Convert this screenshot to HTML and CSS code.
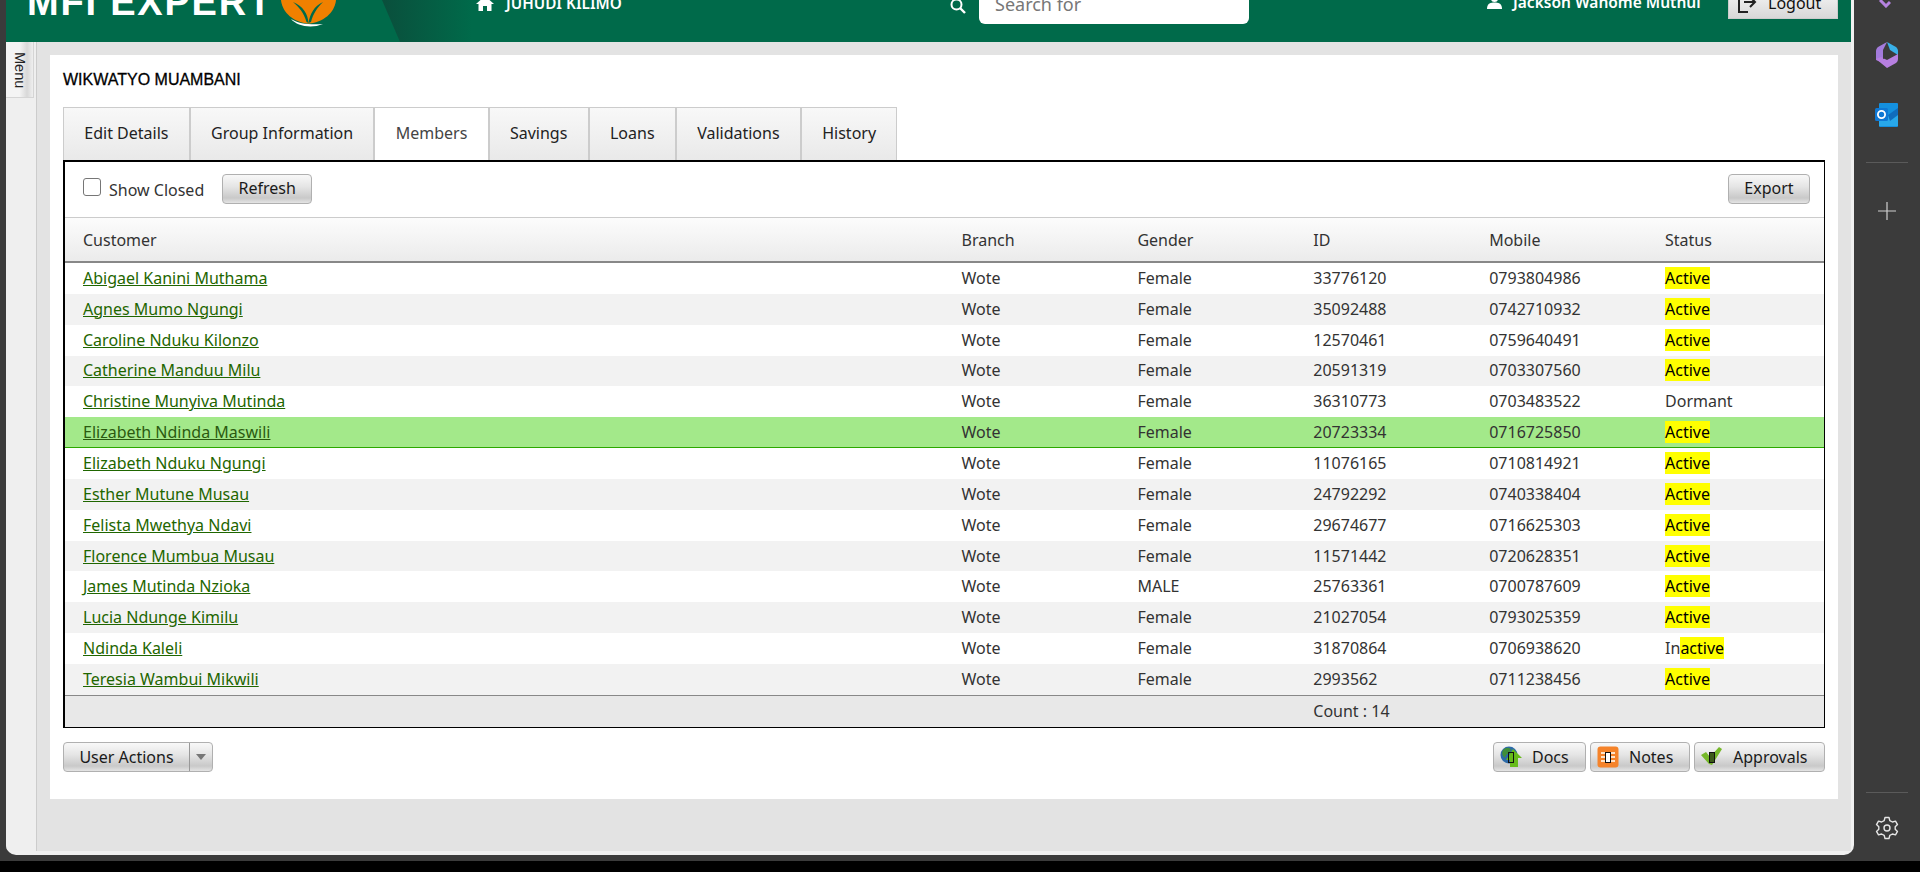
FILE: index.html
```html
<!DOCTYPE html>
<html>
<head>
  <meta charset="UTF-8">
  <link rel="stylesheet" href="styles.css">
</head>
<body>
  <div class="window">
    <div class="top-bar">
      <div class="brand">
        <span class="brand-name">MFI EXPERT</span>
        <svg class="brand-leaf" viewBox="0 0 55 28" width="55" height="28">
          <path d="M0 0 H55 C54 10 46 21 29 23.5 H26 C9 21 1 10 0 0 Z" fill="#f08000"/>
          <path d="M27.5 23 C27 14 22 6 12 2 C18 7 23 13 25.5 22 Z" fill="#006a4a"/>
          <path d="M27.5 23 C29 14 33 6 42 2 C36 8 32 14 30 22 Z" fill="#006a4a"/>
          <path d="M10 19 C16 26 30 29 42 24 C30 25 18 24 10 19 Z" fill="#fff"/>
        </svg>
      </div>
      <div class="brand-slant"></div>
      <div class="org">
        <svg viewBox="0 0 18 16" width="18" height="16"><path d="M9 1 L18 9 H15.5 V16 H11 V11 H7 V16 H2.5 V9 H0 Z" fill="#fff"/></svg>
        <span>JUHUDI KILIMO</span>
      </div>
      <div class="search">
        <svg viewBox="0 0 16 16" width="16" height="16"><circle cx="6.5" cy="6.5" r="5" fill="none" stroke="#fff" stroke-width="2"/><path d="M10 10 L15 15" stroke="#fff" stroke-width="2.4"/></svg>
        <div class="search-box">Search for</div>
      </div>
      <div class="user">
        <svg viewBox="0 0 15 14" width="15" height="14"><circle cx="7.5" cy="3.5" r="3.6" fill="#fff"/><path d="M0 14 C0 8 4 7.5 7.5 7.5 C11 7.5 15 8 15 14 Z" fill="#fff"/></svg>
        <span>Jackson Wahome Muthui</span>
      </div>
      <div class="logout">
        <svg viewBox="0 0 20 20" width="20" height="20"><path d="M11 3 H2 V19 H11" fill="none" stroke="#222" stroke-width="2"/><path d="M7 9 H17 M13 4 L18 9 L13 14" fill="none" stroke="#222" stroke-width="2"/></svg>
        <span>Logout</span>
      </div>
    </div>

    <div class="body-row">
      <div class="rail">
        <div class="rail-tab"><span>Menu</span></div>
      </div>
      <div class="content">
        <div class="panel">
          <div class="panel-title">WIKWATYO MUAMBANI</div>
          <div class="tabs">
            <div class="tab">Edit Details</div>
            <div class="tab">Group Information</div>
            <div class="tab active">Members</div>
            <div class="tab">Savings</div>
            <div class="tab">Loans</div>
            <div class="tab">Validations</div>
            <div class="tab">History</div>
          </div>
          <div class="grid-box">
            <div class="toolbar">
              <label class="show-closed"><span class="check"></span>Show Closed</label>
              <div class="btn btn-refresh">Refresh</div>
              <div class="btn btn-export">Export</div>
            </div>
            <div class="row head">
              <div>Customer</div><div>Branch</div><div>Gender</div><div>ID</div><div>Mobile</div><div>Status</div>
            </div>
            <div class="rows">
              <div class="row"><div><a>Abigael Kanini Muthama</a></div><div>Wote</div><div>Female</div><div>33776120</div><div>0793804986</div><div><mark>Active</mark></div></div>
              <div class="row alt"><div><a>Agnes Mumo Ngungi</a></div><div>Wote</div><div>Female</div><div>35092488</div><div>0742710932</div><div><mark>Active</mark></div></div>
              <div class="row"><div><a>Caroline Nduku Kilonzo</a></div><div>Wote</div><div>Female</div><div>12570461</div><div>0759640491</div><div><mark>Active</mark></div></div>
              <div class="row alt"><div><a>Catherine Manduu Milu</a></div><div>Wote</div><div>Female</div><div>20591319</div><div>0703307560</div><div><mark>Active</mark></div></div>
              <div class="row"><div><a>Christine Munyiva Mutinda</a></div><div>Wote</div><div>Female</div><div>36310773</div><div>0703483522</div><div>Dormant</div></div>
              <div class="row selected"><div><a>Elizabeth Ndinda Maswili</a></div><div>Wote</div><div>Female</div><div>20723334</div><div>0716725850</div><div><mark>Active</mark></div></div>
              <div class="row"><div><a>Elizabeth Nduku Ngungi</a></div><div>Wote</div><div>Female</div><div>11076165</div><div>0710814921</div><div><mark>Active</mark></div></div>
              <div class="row alt"><div><a>Esther Mutune Musau</a></div><div>Wote</div><div>Female</div><div>24792292</div><div>0740338404</div><div><mark>Active</mark></div></div>
              <div class="row"><div><a>Felista Mwethya Ndavi</a></div><div>Wote</div><div>Female</div><div>29674677</div><div>0716625303</div><div><mark>Active</mark></div></div>
              <div class="row alt"><div><a>Florence Mumbua Musau</a></div><div>Wote</div><div>Female</div><div>11571442</div><div>0720628351</div><div><mark>Active</mark></div></div>
              <div class="row"><div><a>James Mutinda Nzioka</a></div><div>Wote</div><div>MALE</div><div>25763361</div><div>0700787609</div><div><mark>Active</mark></div></div>
              <div class="row alt"><div><a>Lucia Ndunge Kimilu</a></div><div>Wote</div><div>Female</div><div>21027054</div><div>0793025359</div><div><mark>Active</mark></div></div>
              <div class="row"><div><a>Ndinda Kaleli</a></div><div>Wote</div><div>Female</div><div>31870864</div><div>0706938620</div><div>In<mark>active</mark></div></div>
              <div class="row alt"><div><a>Teresia Wambui Mikwili</a></div><div>Wote</div><div>Female</div><div>2993562</div><div>0711238456</div><div><mark>Active</mark></div></div>
            </div>
            <div class="row foot">
              <div></div><div></div><div></div><div>Count : 14</div><div></div><div></div>
            </div>
          </div>
          <div class="actions">
            <div class="btn split">
              <span class="split-label">User Actions</span>
              <span class="split-arrow"></span>
            </div>
            <div class="actions-right">
              <div class="btn btn-icon btn-docs">
                <svg viewBox="0 0 22 22" width="22" height="22">
                  <circle cx="9" cy="9" r="8.5" fill="#2c6aa8"/>
                  <path d="M3 4 C6 1 10 1 11 4 C10 8 6 7 5 12 C3 10 1 8 3 4 Z" fill="#3f8f3a"/>
                  <path d="M13 3 L22 12 H18 V21 H10 V14 H6 Z" fill="#66bb1a"/>
                  <rect x="8.5" y="6.5" width="5" height="10" fill="none" stroke="#111" stroke-width="1"/>
                </svg>
                <span>Docs</span>
              </div>
              <div class="btn btn-icon btn-notes">
                <svg viewBox="0 0 22 22" width="22" height="22">
                  <rect x="0.5" y="0.5" width="21" height="21" rx="3" fill="#f5832a"/>
                  <path d="M4 7 H18 M4 11 H18 M4 15 H18" stroke="#ffe3c8" stroke-width="2"/>
                  <rect x="8.5" y="6.5" width="5" height="10" fill="#fff" stroke="#111" stroke-width="1"/>
                </svg>
                <span>Notes</span>
              </div>
              <div class="btn btn-icon btn-approvals">
                <svg viewBox="0 0 22 22" width="22" height="22">
                  <path d="M0 9 L5 6 L9 11 L18 1 L21 3 L11 19 L8 18 Z" fill="#76b82a"/>
                  <rect x="8.5" y="6.5" width="5" height="10" fill="#3d5a1a" stroke="#111" stroke-width="1"/>
                </svg>
                <span>Approvals</span>
              </div>
            </div>
          </div>
        </div>
      </div>
    </div>
  </div>

  <div class="side">
    <svg class="side-part" viewBox="0 0 12 8" width="12" height="8"><path d="M1 0 L7 6 L11 2" fill="none" stroke="#b583e0" stroke-width="3"/></svg>
    <svg class="side-copilot" viewBox="0 0 22 26" width="22" height="26">
      <path d="M11 0 L20 5 C21 6 22 7 22 9 V13 L14 8 Z" fill="#39b0e8"/>
      <path d="M11 0 L2 5 C1 6 0 7 0 9 V18 L7 21 V8 Z" fill="#a37bdc"/>
      <path d="M0 17 L11 26 L20 21 C21 20 22 19 22 17 V12 L11 18 L5 15 Z" fill="#b77fe0"/>
      <path d="M7 8 L14 8 L15 13 L7 17 Z" fill="#3b3b3b"/>
    </svg>
    <svg class="side-outlook" viewBox="0 0 24 24" width="24" height="24">
      <rect x="4" y="0" width="19" height="24" rx="1" fill="#1490df"/>
      <path d="M4 12 L23 12 V23 H4 Z" fill="#28a8ea"/>
      <path d="M13 12 L23 5 V12 L15 18 Z" fill="#0f6cbd"/>
      <rect x="0" y="5" width="13" height="13" rx="1.5" fill="#0f78d4"/>
      <circle cx="6.5" cy="11.5" r="3.6" fill="none" stroke="#fff" stroke-width="1.8"/>
    </svg>
    <div class="side-line"></div>
    <svg class="side-plus" viewBox="0 0 18 18" width="18" height="18"><path d="M9 0 V18 M0 9 H18" stroke="#d0d0d0" stroke-width="1.2"/></svg>
    <div class="side-gap"></div>
    <div class="side-line"></div>
    <svg class="side-gear" viewBox="0 0 24 24" width="24" height="24">
      <circle cx="12" cy="12" r="3" fill="none" stroke="#e6e6e6" stroke-width="1.4"/>
      <path d="M10 1.5 H14 L14.8 4.6 L17.4 6 L20.5 5.1 L22.5 8.6 L20.2 10.8 V13.2 L22.5 15.4 L20.5 18.9 L17.4 18 L14.8 19.4 L14 22.5 H10 L9.2 19.4 L6.6 18 L3.5 18.9 L1.5 15.4 L3.8 13.2 V10.8 L1.5 8.6 L3.5 5.1 L6.6 6 L9.2 4.6 Z" fill="none" stroke="#e6e6e6" stroke-width="1.4" stroke-linejoin="round"/>
    </svg>
  </div>
</body>
</html>
```

FILE: styles.css
```css
* {
  margin: 0;
  padding: 0;
  box-sizing: border-box;
}

html, body {
  height: 100%;
  overflow: hidden;
}

body {
  display: flex;
  height: 872px;
  padding-left: 6px;
  background: linear-gradient(#3b3b3b 861px, #000 861px);
  font-family: "Noto Sans", "Open Sans", sans-serif;
  font-size: 14px;
  color: #333;
}

.window {
  display: flex;
  flex-direction: column;
  width: 1848px;
  height: 855px;
  padding: 0 3px 4px 0;
  background: #f0f0f0;
  border-radius: 0 0 10px 10px;
  overflow: hidden;
}

.top-bar {
  position: relative;
  display: flex;
  flex: none;
  align-items: flex-end;
  height: 42px;
  background: #006a4a;
  overflow: hidden;
  color: #fff;
}

.brand {
  display: flex;
  flex: none;
  align-items: flex-start;
  width: 470px;
  height: 42px;
  padding-left: 21px;
}

.brand-name {
  width: 254px;
  margin-top: -12px;
  font-family: "Liberation Sans", sans-serif;
  font-size: 38px;
  font-weight: 700;
  line-height: 28px;
  letter-spacing: 1.8px;
  white-space: nowrap;
}

.brand-leaf {
  flex: none;
}

.brand-slant {
  position: absolute;
  left: 376px;
  top: 0;
  width: 90px;
  height: 42px;
  background: linear-gradient(90deg, #0a4f3c, #006a4a);
  clip-path: polygon(0 0, 100% 0, 100% 100%, 18px 100%);
}

.org {
  position: relative;
  display: flex;
  flex: none;
  align-items: center;
  gap: 12px;
  width: 474px;
  height: 18px;
  margin-bottom: 30px;
  font-size: 15.3px;
  font-weight: 600;
}

.search {
  display: flex;
  flex: none;
  align-items: flex-end;
  gap: 13px;
  width: 537px;
  margin-bottom: 18px;
}

.search svg {
  margin-bottom: 10px;
}

.search-box {
  width: 270px;
  height: 34px;
  padding: 2px 16px;
  background: #fff;
  border-radius: 0 0 6px 6px;
  color: #777;
  font-size: 18px;
  line-height: 24px;
}

.user {
  display: flex;
  flex: none;
  align-items: center;
  gap: 11px;
  width: 241px;
  margin-bottom: 29px;
  font-size: 15.5px;
  font-weight: 600;
  white-space: nowrap;
}

.logout {
  display: flex;
  flex: none;
  align-items: center;
  gap: 11px;
  width: 110px;
  height: 30px;
  margin-bottom: 23px;
  padding: 0 0 2px 8px;
  background: linear-gradient(#f6f6f6, #d8d8d8);
  border: 1px solid #ccc;
  color: #111;
  font-size: 16px;
}

.body-row {
  display: flex;
  flex: 1;
  min-height: 0;
}

.rail {
  flex: none;
  width: 31px;
  background: #efefef;
  border-right: 1px solid #ccc;
}

.rail-tab {
  display: flex;
  justify-content: center;
  width: 28px;
  height: 56px;
  padding-top: 10px;
  background: linear-gradient(90deg, #f4f4f4, #f4f4f4 50%, #d8d8d8 78%, #efefef);
  border-right: 1px solid #d5d5d5;
  border-bottom: 1px solid #d5d5d5;
}

.rail-tab span {
  writing-mode: vertical-rl;
  font-family: "Liberation Sans", sans-serif;
  font-size: 14.5px;
  color: #222;
}

.content {
  flex: 1;
  padding: 13px 13px 52px;
  background: #e3e3e3;
}

.panel {
  width: 1788px;
  height: 744px;
  padding: 0 13px;
  background: #fff;
}

.panel-title {
  height: 52px;
  padding-top: 15px;
  font-family: "Liberation Sans", sans-serif;
  font-size: 16px;
  font-weight: 400;
  line-height: 20px;
  color: #000;
  -webkit-text-stroke: 0.3px #000;
}

.tabs {
  display: flex;
  height: 53px;
}

.tab {
  display: flex;
  align-items: center;
  height: 53px;
  padding: 0 20.3px 2px;
  background: linear-gradient(#f8f8f8, #e9e9e9);
  border: 1px solid #ccc;
  border-bottom: none;
  font-size: 16px;
  color: #222;
}

.tab.active {
  background: #fff;
  color: #444;
}

.grid-box {
  position: relative;
  width: 1762px;
  height: 568px;
  border: 1px solid #000;
  border-width: 2px 1px 2px 2px;
}

.toolbar {
  display: flex;
  align-items: center;
  height: 55px;
  padding: 0 14px 0 18px;
}

.show-closed {
  display: flex;
  align-items: center;
  font-size: 16px;
  color: #333;
}

.check {
  position: relative;
  top: -3px;
  width: 18px;
  height: 18px;
  margin-right: 8px;
  background: #fff;
  border: 1px solid #767676;
  border-radius: 3px;
}

.btn {
  display: flex;
  align-items: center;
  justify-content: center;
  height: 30px;
  background: linear-gradient(#f8f8f8, #e6e6e6 40%, #c9c9c9 82%, #e4e4e4);
  border: 1px solid #b0b0b0;
  border-radius: 4px;
  font-size: 16px;
  color: #1a1a1a;
}

.btn-refresh {
  width: 90px;
  margin-left: 18px;
  margin-top: -1px;
  padding-bottom: 2px;
}

.btn-export {
  width: 82px;
  margin-left: auto;
  margin-top: -1px;
  padding-bottom: 2px;
}

.row {
  display: grid;
  grid-template-columns: 50% repeat(5, 10%);
  align-items: center;
  height: 30.857px;
  font-size: 16px;
  color: #333;
}

.rows .row {
  padding-bottom: 1px;
}

.row > div {
  padding-left: 18px;
  white-space: nowrap;
}

.row > div + div {
  padding-left: 17px;
}

.row.alt {
  background: #f2f2f2;
}

.row.head {
  height: 46px;
  background: linear-gradient(#fcfcfc, #ebebeb);
  border-top: 1px solid #ccc;
  border-bottom: 2px solid #888;
}

.row.selected {
  background: #a3e98a;
  box-shadow: inset 0 -1px 0 #2ca800;
}

.row a {
  color: #1f6600;
  text-decoration: underline;
}

.row.selected a {
  color: #2b5a10;
}

.row mark {
  background: #ff0;
  color: #000;
}

.row.foot {
  height: 32px;
  background: #e8e8e8;
  border-top: 1px solid #888;
}

.actions {
  display: flex;
  justify-content: space-between;
  margin-top: 14px;
}

.actions-right {
  display: flex;
  gap: 4px;
}

.split {
  width: 150px;
  justify-content: flex-start;
}

.split-label {
  width: 126px;
  line-height: 28px;
  text-align: center;
  border-right: 1px solid #999;
}

.split-arrow {
  width: 0;
  height: 0;
  margin-left: 6px;
  border: 5px solid transparent;
  border-top: 6px solid #777;
  border-bottom: none;
}

.btn-icon {
  justify-content: flex-start;
  gap: 10px;
  padding-left: 6px;
}

.btn-docs {
  width: 93px;
}

.btn-notes {
  width: 100px;
}

.btn-approvals {
  width: 131px;
}

.side {
  display: flex;
  flex: none;
  flex-direction: column;
  align-items: center;
  width: 66px;
  height: 861px;
  color: #fff;
}

.side-part {
  margin-left: -4px;
}

.side-copilot {
  flex: none;
  margin-top: 34px;
}

.side-outlook {
  flex: none;
  margin-top: 35px;
}

.side-line {
  flex: none;
  width: 42px;
  height: 1px;
  margin-top: 35px;
  background: #5a5a5a;
}

.side-plus {
  flex: none;
  margin-top: 39px;
}

.side-gap {
  flex: none;
  height: 537px;
}

.side-gear {
  flex: none;
  margin-top: 23px;
}
```
